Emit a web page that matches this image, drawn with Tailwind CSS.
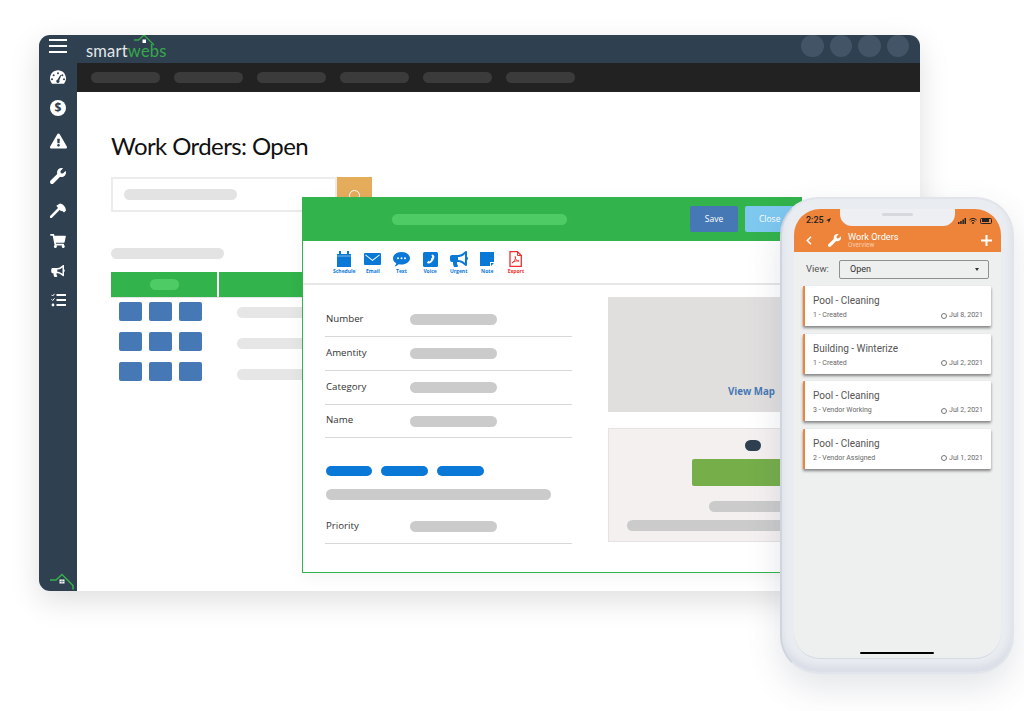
<!DOCTYPE html>
<html lang="en">
<head>
    <meta charset="UTF-8">
    <title>Smartwebs Work Orders</title>
    <script src="https://cdn.jsdelivr.net/npm/@tailwindcss/browser@4"></script>
</head>
<body class="bg-white">
<div class="relative w-[1024px] h-[711px] overflow-hidden bg-white font-['Open_Sans',sans-serif]">

    <!-- desktop window -->
    <div class="absolute left-[39px] top-[35px] w-[881px] h-[556px] flex rounded-t-[11px] rounded-bl-[11px] overflow-hidden bg-white shadow-[0_10px_30px_rgba(0,0,0,0.13)]">
        <aside class="w-[38px] shrink-0 bg-[#2f4050] flex flex-col items-center text-white">
            <div class="mt-[4px] w-[18px] flex flex-col gap-[4px]">
                <div class="h-[2px] bg-white"></div>
                <div class="h-[2px] bg-white"></div>
                <div class="h-[2px] bg-white"></div>
            </div>
            <svg class="mt-[16px] w-[16px] h-[16px]" viewBox="0 0 24 24" fill="#fff"><path fill-rule="evenodd" d="M12 2C5.4 2 0 7.4 0 14c0 2.9 1 5.6 2.8 7.7.3.2.6.3.9.3h16.6c.3 0 .6-.1.9-.3C23 19.600 24 16.900 24 14 24 7.400 18.600 2 12 2zM12 5a1.500 1.500 0 110 3 1.500 1.500 0 010-3zM5.500 8a1.500 1.500 0 110 3 1.500 1.500 0 010-3zM18.500 8a1.500 1.500 0 110 3 1.500 1.500 0 010-3zM3 14a1.500 1.500 0 110 3 1.500 1.500 0 010-3zM21 14a1.500 1.500 0 110 3 1.500 1.500 0 010-3zM15.500 9l1.400.600-3 7.400a2.500 2.500 0 11-2.800-.900z"/></svg>
            <div class="mt-[15px] w-[16px] h-[16px] rounded-full bg-white text-[#2f4050] text-[12px] leading-[16px] font-bold text-center">$</div>
            <svg class="mt-[17px] w-[17px] h-[16px]" viewBox="0 0 576 512" fill="#fff"><path d="M569.517 440.013C587.975 472.007 564.806 512 527.94 512H48.054c-36.937 0-59.999-40.055-41.577-71.987L246.423 24.995c18.467-32.009 64.72-31.951 83.154 0l239.94 415.018zM288 354c-25.405 0-46 20.595-46 46s20.595 46 46 46 46-20.595 46-46-20.595-46-46-46zm-43.673-165.346l7.418 136c.347 6.364 5.609 11.346 11.982 11.346h48.546c6.373 0 11.635-4.982 11.982-11.346l7.418-136c.375-6.874-5.098-12.654-11.982-12.654h-63.383c-6.884 0-12.356 5.78-11.981 12.654z"/></svg>
            <svg class="mt-[19px] w-[16px] h-[16px]" viewBox="0 0 512 512" fill="#fff"><path d="M507.73 109.1c-2.24-9.03-13.54-12.09-20.12-5.51l-74.36 74.36-67.88-11.31-11.31-67.88 74.36-74.36c6.62-6.62 3.43-17.9-5.66-20.16-47.38-11.74-99.55.91-136.58 37.93-39.64 39.64-50.55 97.1-34.05 147.2L18.74 402.76c-24.99 24.99-24.99 65.51 0 90.5 24.99 24.99 65.51 24.99 90.5 0l213.21-213.21c50.12 16.71 107.47 5.68 147.37-34.22 37.07-37.07 49.7-89.32 37.91-136.73z"/></svg>
            <svg class="mt-[19px] w-[16px] h-[15px]" viewBox="0 0 24 22" fill="#fff"><path d="M9.500 4 15 .5Q20 1 23 7L24 11 21 14 18 11.500 16.500 12 11.500 6.500z"/><path d="M1.500 20.500 13 9" stroke="#fff" stroke-width="4" stroke-linecap="round"/></svg>
            <svg class="mt-[16px] w-[16px] h-[14px]" viewBox="0 0 576 512" fill="#fff"><path d="M528.12 301.319l47.273-208C578.806 78.301 567.391 64 551.99 64H159.208l-9.166-44.81C147.758 8.021 137.93 0 126.529 0H24C10.745 0 0 10.745 0 24v16c0 13.255 10.745 24 24 24h69.883l70.248 343.435C147.325 417.1 136 435.222 136 456c0 30.928 25.072 56 56 56s56-25.072 56-56c0-15.674-6.447-29.835-16.824-40h209.647C430.447 426.165 424 440.326 424 456c0 30.928 25.072 56 56 56s56-25.072 56-56c0-22.172-12.888-41.332-31.579-50.405l5.517-24.276c3.413-15.018-8.002-29.319-23.403-29.319H218.117l-6.545-32h293.145c11.206 0 20.92-7.754 23.403-18.681z"/></svg>
            <svg class="mt-[17px] w-[14px] h-[12px]" viewBox="0 0 576 512" fill="#fff"><path d="M576 240c0-23.63-12.95-44.04-32-55.12V32.01C544 23.26 537.02 0 512 0c-7.12 0-14.19 2.38-19.98 7.02l-85.03 68.03C364.28 109.19 310.66 128 256 128H64c-35.35 0-64 28.65-64 64v96c0 35.35 28.65 64 64 64h33.7c-1.39 10.48-2.18 21.14-2.18 32 0 39.77 9.26 77.35 25.56 110.94 5.19 10.69 16.52 17.06 28.4 17.06h74.28c26.05 0 41.69-29.84 25.9-50.56-16.4-21.52-26.15-48.36-26.15-77.44 0-11.11 1.62-21.79 4.41-32H256c54.66 0 108.28 18.81 150.98 52.95l85.03 68.03a32.023 32.023 0 0 0 19.98 7.02c24.92 0 32-22.78 32-32V295.13C563.05 284.04 576 263.63 576 240zm-96 141.42l-33.05-26.44C392.95 311.78 325.12 288 256 288v-96c69.12 0 136.95-23.78 190.95-66.98L480 98.58v282.84z"/></svg>
            <svg class="mt-[16px] w-[15px] h-[14px]" viewBox="0 0 15 14" fill="none" stroke="#fff"><path d="M.5 1.800 1.700 3 3.500.8M.5 6.300 1.700 7.500 3.500 5.300" stroke-width="1"/><circle cx="2" cy="12" r="1.400" fill="#fff" stroke="none"/><path d="M5.500 2h9.500M5.500 7h9.500M5.500 12h9.500" stroke-width="1.800"/></svg>
            <svg class="mt-auto mb-[1px] ml-[7px] w-[24px] h-[17px]" viewBox="0 0 24 17" fill="none"><path d="M0 7h6L12 1.500 23 12.500v4" stroke="#34b34a" stroke-width="1.500"/><path d="M9.500 6.500h5v4h-5z" fill="#fff"/><path d="M12 6.500v4M9.500 8.500h5" stroke="#2f4050" stroke-width=".5"/></svg>
        </aside>
        <div class="flex-1 flex flex-col min-w-0">
            <header class="relative h-[28px] bg-[#2f4050] flex items-center shrink-0">
                <div class="ml-[9px] mt-[3px] text-[16.500px] leading-[28px] tracking-[0.2px] font-['Lato',sans-serif] text-[#e4e8ea]">smart<span class="text-[#35a94a]">webs</span></div>
                <svg class="absolute left-[57px] top-[-1px] w-[21px] h-[13px]" viewBox="0 0 21 13" fill="none"><path d="M0 6h4.500L10 1l10 10" stroke="#35a94a" stroke-width="1.300"/><path d="M8.500 5.500h3.500v3.500H8.500z" fill="#fff"/></svg>
                <div class="ml-auto mr-[11px] flex gap-[6px] -mt-[6px]">
                    <div class="w-[22.500px] h-[22px] rounded-full bg-[#425466]"></div>
                    <div class="w-[22.500px] h-[22px] rounded-full bg-[#425466]"></div>
                    <div class="w-[22.500px] h-[22px] rounded-full bg-[#425466]"></div>
                    <div class="w-[22.500px] h-[22px] rounded-full bg-[#425466]"></div>
                </div>
            </header>
            <nav class="h-[29px] bg-[#222222] flex items-center gap-[14px] pl-[14px] shrink-0">
                <div class="w-[69px] h-[11px] rounded-full bg-[#3b3b3b]"></div>
                <div class="w-[69px] h-[11px] rounded-full bg-[#3b3b3b]"></div>
                <div class="w-[69px] h-[11px] rounded-full bg-[#3b3b3b]"></div>
                <div class="w-[69px] h-[11px] rounded-full bg-[#3b3b3b]"></div>
                <div class="w-[69px] h-[11px] rounded-full bg-[#3b3b3b]"></div>
                <div class="w-[69px] h-[11px] rounded-full bg-[#3b3b3b]"></div>
            </nav>
            <main class="pl-[34px] flex-1">
                <h1 class="mt-[37px] text-[24px] tracking-[-0.6px] leading-[34px] font-['Lato',sans-serif] text-[#111111]">Work Orders: Open</h1>
                <div class="mt-[14px] flex h-[35px] w-[261px]">
                    <div class="w-[226px] border-2 border-[#ececec] flex items-center pl-[11px]">
                        <div class="w-[113px] h-[11px] rounded-full bg-[#e3e3e3]"></div>
                    </div>
                    <div class="w-[35px] bg-[#e5ac5c] flex items-center justify-center">
                        <div class="w-[11px] h-[11px] mt-[1px] rounded-full border border-white"></div>
                    </div>
                </div>
                <div class="mt-[36px] w-[113px] h-[11px] rounded-full bg-[#e3e3e3]"></div>
                <div class="mt-[13px] flex gap-[2px] h-[26px] w-[300px] border-b border-[#e4e4e4]">
                    <div class="w-[106px] h-[25px] bg-[#32b34b] flex items-center justify-center">
                        <div class="w-[29px] h-[11px] rounded-full bg-[#4fcb65]"></div>
                    </div>
                    <div class="flex-1 h-[25px] bg-[#32b34b]"></div>
                </div>
                <div class="mt-[3px] flex">
                    <div class="w-[126px] pl-[8px] grid grid-cols-[repeat(3,23px)] gap-x-[7px] gap-y-[11px] pt-[1px] content-start">
                        <div class="w-[23px] h-[19px] rounded-[2px] bg-[#4578b4]"></div>
                        <div class="w-[23px] h-[19px] rounded-[2px] bg-[#4578b4]"></div>
                        <div class="w-[23px] h-[19px] rounded-[2px] bg-[#4578b4]"></div>
                        <div class="w-[23px] h-[19px] rounded-[2px] bg-[#4578b4]"></div>
                        <div class="w-[23px] h-[19px] rounded-[2px] bg-[#4578b4]"></div>
                        <div class="w-[23px] h-[19px] rounded-[2px] bg-[#4578b4]"></div>
                        <div class="w-[23px] h-[19px] rounded-[2px] bg-[#4578b4]"></div>
                        <div class="w-[23px] h-[19px] rounded-[2px] bg-[#4578b4]"></div>
                        <div class="w-[23px] h-[19px] rounded-[2px] bg-[#4578b4]"></div>
                    </div>
                    <div class="pt-[6px] flex flex-col gap-[20px]">
                        <div class="w-[70px] h-[11px] rounded-full bg-[#e6e6e6]"></div>
                        <div class="w-[70px] h-[11px] rounded-full bg-[#e6e6e6]"></div>
                        <div class="w-[70px] h-[11px] rounded-full bg-[#e6e6e6]"></div>
                    </div>
                </div>
            </main>
        </div>
    </div>

    <!-- work order modal -->
    <div class="absolute left-[302px] top-[197px] w-[500px] h-[376px] bg-white border border-[#32b34b] shadow-[0_4px_16px_rgba(0,0,0,0.05)]">
        <div class="h-[43px] bg-[#32b34b] flex items-center">
            <div class="ml-[89px] -mt-[1px] w-[175px] h-[11px] shrink-0 rounded-full bg-[#4fcb65]"></div>
            <div class="ml-[123px] -mt-[2px] w-[48px] h-[26px] shrink-0 rounded-[2px] bg-[#4578b4] text-white text-[8.500px] leading-[26px] text-center">Save</div>
            <div class="ml-[7px] -mt-[2px] w-[60px] h-[26px] shrink-0 rounded-[2px] bg-[#7ec8f0] text-white text-[8.500px] leading-[26px] pl-[14px]">Close</div>
        </div>
        <div class="h-[44px] border-b-2 border-[#e6e6e6] pl-[27px] pt-[10px] flex text-[#0a78d6] text-[5px] leading-[6px] font-bold">
            <div class="w-[28.600px] flex flex-col items-center gap-[1px]">
                <svg class="w-[16px] h-[16px]" viewBox="0 0 16 16" fill="#0a78d6"><path d="M1 3h14v13H1z"/><path d="M3 0h2v4H3zM11 0h2v4h-2z"/><path d="M1 5h14" stroke="#fff" stroke-width=".5"/></svg>
                <span>Schedule</span>
            </div>
            <div class="w-[28.600px] flex flex-col items-center gap-[1px]">
                <svg class="w-[17px] h-[16px]" viewBox="0 0 17 16" fill="#0a78d6"><path fill-rule="evenodd" d="M1 2h15a1 1 0 011 1v10a1 1 0 01-1 1H1a1 1 0 01-1-1V3a1 1 0 011-1zM1.200 4.200 8.500 10l7.300-5.800-.5-.7L8.500 8.800 1.700 3.500z"/></svg>
                <span>Email</span>
            </div>
            <div class="w-[28.600px] flex flex-col items-center gap-[1px]">
                <svg class="w-[17px] h-[16px]" viewBox="0 0 17 16" fill="#0a78d6"><path fill-rule="evenodd" d="M8.500 1C13 1 17 3.700 17 7.300s-4 6.300-8.500 6.300c-1 0-2-.100-2.900-.400C4.500 14.400 3 15.200 1.500 15.500c.8-.8 1.500-2 1.700-3.200C1.200 11.200 0 9.400 0 7.300 0 3.700 4 1 8.500 1zM5 6.300a1 1 0 100 2 1 1 0 000-2zM8.500 6.300a1 1 0 100 2 1 1 0 000-2zM12 6.300a1 1 0 100 2 1 1 0 000-2z"/></svg>
                <span>Text</span>
            </div>
            <div class="w-[28.600px] flex flex-col items-center gap-[1px]">
                <svg class="w-[15px] h-[16px]" viewBox="0 0 15 16" fill="#0a78d6"><path fill-rule="evenodd" d="M1.500 1h12A1.500 1.500 0 0115 2.500v12a1.500 1.500 0 01-1.500 1.500h-12A1.500 1.500 0 010 14.500v-12A1.500 1.500 0 011.500 1zM9.800 3.500 8.500 4l.8 2.500-1.200.7c.3 1.200-.5 2.500-1.500 3.200l-1-.7-1.600 1.700.8 1.200c3.500.3 7-4.500 6.500-7.500z"/></svg>
                <span>Voice</span>
            </div>
            <div class="w-[28.600px] flex flex-col items-center gap-[1px]">
                <svg class="w-[18px] h-[16px]" viewBox="0 0 576 512" fill="#0a78d6"><path d="M576 240c0-23.63-12.95-44.04-32-55.12V32.01C544 23.26 537.02 0 512 0c-7.12 0-14.19 2.38-19.98 7.02l-85.03 68.03C364.28 109.19 310.66 128 256 128H64c-35.35 0-64 28.65-64 64v96c0 35.35 28.65 64 64 64h33.7c-1.39 10.48-2.18 21.14-2.18 32 0 39.77 9.26 77.35 25.56 110.94 5.19 10.69 16.52 17.06 28.4 17.06h74.28c26.05 0 41.69-29.84 25.9-50.56-16.4-21.52-26.15-48.36-26.15-77.44 0-11.11 1.62-21.79 4.41-32H256c54.66 0 108.28 18.81 150.98 52.95l85.03 68.03a32.023 32.023 0 0 0 19.98 7.02c24.92 0 32-22.78 32-32V295.13C563.05 284.04 576 263.63 576 240zm-96 141.42l-33.05-26.44C392.95 311.78 325.12 288 256 288v-96c69.12 0 136.95-23.78 190.95-66.98L480 98.58v282.84z"/></svg>
                <span>Urgent</span>
            </div>
            <div class="w-[28.600px] flex flex-col items-center gap-[1px]">
                <svg class="w-[14px] h-[16px]" viewBox="0 0 14 16" fill="#0a78d6"><path d="M0 1h14v10h-4v4H0z"/><path d="M11 12h3l-3 3z"/></svg>
                <span>Note</span>
            </div>
            <div class="w-[28.600px] flex flex-col items-center gap-[1px] text-[#f02d2d]">
                <svg class="w-[13px] h-[16px]" viewBox="0 0 13 16" fill="none" stroke="#f02d2d"><path d="M1 .700h7.500l3.800 3.800v10.800H1z" stroke-width="1.300"/><path d="M8.500 1v3.500H12" stroke-width="1"/><path d="M3 12c2-1 4-4 3.300-6.500C5.800 8 8 10.500 10 10c-2-.500-5 .2-7 2z" stroke-width=".9"/></svg>
                <span>Export</span>
            </div>
        </div>
        <div class="flex pt-[12px]">
            <div class="w-[247px] ml-[22px] shrink-0 pt-[6px] text-[9.700px] text-[#333333]">
                <div class="h-[34px] border-b border-[#d8d8d8] flex items-center">
                    <span class="w-[85px] pl-[1px] -mt-[1px]">Number</span><div class="w-[87px] h-[11px] rounded-full bg-[#cbcbcb]"></div>
                </div>
                <div class="h-[34px] border-b border-[#d8d8d8] flex items-center">
                    <span class="w-[85px] pl-[1px] -mt-[1px]">Amentity</span><div class="w-[87px] h-[11px] rounded-full bg-[#cbcbcb]"></div>
                </div>
                <div class="h-[34px] border-b border-[#d8d8d8] flex items-center">
                    <span class="w-[85px] pl-[1px] -mt-[1px]">Category</span><div class="w-[87px] h-[11px] rounded-full bg-[#cbcbcb]"></div>
                </div>
                <div class="h-[33px] border-b border-[#d8d8d8] flex items-center">
                    <span class="w-[85px] pl-[1px] -mt-[1px]">Name</span><div class="w-[87px] h-[11px] rounded-full bg-[#cbcbcb]"></div>
                </div>
                <div class="mt-[28px] ml-[1px] flex gap-[9px]">
                    <div class="w-[46px] h-[10px] rounded-full bg-[#0a78d6]"></div>
                    <div class="w-[47px] h-[10px] rounded-full bg-[#0a78d6]"></div>
                    <div class="w-[47px] h-[10px] rounded-full bg-[#0a78d6]"></div>
                </div>
                <div class="mt-[13px] ml-[1px] w-[225px] h-[11px] rounded-full bg-[#cbcbcb]"></div>
                <div class="mt-[10px] h-[34px] border-b border-[#d8d8d8] flex items-center">
                    <span class="w-[85px] pl-[1px]">Priority</span><div class="w-[87px] h-[11px] rounded-full bg-[#cbcbcb]"></div>
                </div>
            </div>
            <div class="ml-[36px] w-[193px] flex flex-col gap-[16px]">
                <div class="h-[115px] bg-[#e1dfde] flex items-end pb-[14px] pl-[120px] text-[9.700px] leading-[12px] font-bold text-[#4578b4] whitespace-nowrap">View Map</div>
                <div class="h-[114px] bg-[#f5f0f0] border border-[#e4e2e2] flex flex-col">
                    <div class="ml-[136px] mt-[11px] w-[16px] h-[11px] rounded-full bg-[#2f4050]"></div>
                    <div class="ml-[83px] mt-[8px] w-[110px] h-[27px] rounded-[2px] bg-[#76ae4a]"></div>
                    <div class="ml-[100px] mt-[15px] w-[90px] h-[11px] rounded-full bg-[#cbcbcb]"></div>
                    <div class="ml-[18px] mt-[8px] w-[170px] h-[11px] rounded-full bg-[#cbcbcb]"></div>
                </div>
            </div>
        </div>
    </div>

    <!-- phone -->
    <div class="absolute left-[780px] top-[197px] w-[234px] h-[477px] rounded-[38px] bg-[#e9ecf1] border-2 border-[#e1e5eb] border-l-[#cfd4de] shadow-[0_14px_34px_rgba(60,70,90,0.14),inset_0_-6px_6px_rgba(170,180,200,0.25)] p-[10px] pl-[12px] pr-[11px] pb-[13px]">
        <div class="relative w-full h-full rounded-[26px] overflow-hidden bg-[#eeefef] border-b border-[#d5dbe3] font-['Roboto',sans-serif]">
            <div class="h-[43px] bg-[#ee843a] text-white relative">
                <div class="absolute left-[46px] top-0 w-[115px] h-[17px] rounded-b-[12px] bg-[#edeff2]">
                    <div class="mx-auto mt-[4px] w-[31px] h-[3px] rounded-full bg-[#d5d8dc]"></div>
                </div>
                <div class="flex items-center h-[20px] pl-[12px] pr-[9px] pt-[3px] text-[9px] font-medium text-[#222222]">
                    <span>2:25</span>
                    <svg class="ml-[2px] w-[5px] h-[5px]" viewBox="0 0 6 6" fill="#222222"><path d="M6 0 0 2.800l2.800.4L3.300 6z"/></svg>
                    <svg class="ml-auto w-[8px] h-[6px]" viewBox="0 0 8 6" fill="#222222"><path d="M0 4h1.500v2H0zM2.200 3h1.500v3H2.200zM4.400 1.500h1.500V6H4.400zM6.500 0H8v6H6.500z"/></svg>
                    <svg class="ml-[3px] w-[8px] h-[6px]" viewBox="0 0 8 6" fill="none" stroke="#222222"><path d="M.4 2a5 5 0 017.200 0M1.800 3.400a3 3 0 014.400 0" stroke-width="1"/><circle cx="4" cy="5" r=".9" fill="#222222" stroke="none"/></svg>
                    <div class="ml-[3px] w-[12px] h-[6px] rounded-[1.500px] border border-[#222222] p-[0.500px]"><div class="w-[7px] h-full bg-[#222222]"></div></div>
                </div>
                <div class="flex items-center h-[23px] pl-[12px] pr-[9px]">
                    <svg class="w-[6px] h-[9px]" viewBox="0 0 6 9" fill="none" stroke="#fff" stroke-width="1.600"><path d="M5 .700 1.300 4.500 5 8.300"/></svg>
                    <svg class="ml-[16px] w-[13px] h-[13px]" viewBox="0 0 512 512" fill="#fff"><path d="M507.73 109.1c-2.24-9.03-13.54-12.09-20.12-5.51l-74.36 74.36-67.88-11.31-11.31-67.88 74.36-74.36c6.62-6.62 3.43-17.9-5.66-20.16-47.38-11.74-99.55.91-136.58 37.93-39.64 39.64-50.55 97.1-34.05 147.2L18.74 402.76c-24.99 24.99-24.99 65.51 0 90.5 24.99 24.99 65.51 24.99 90.5 0l213.21-213.21c50.12 16.71 107.47 5.68 147.37-34.22 37.07-37.07 49.7-89.32 37.91-136.73z"/></svg>
                    <div class="ml-[7px] flex flex-col">
                        <span class="text-[9.200px] leading-[10px] whitespace-nowrap">Work Orders</span>
                        <span class="text-[6.500px] leading-[7px] text-white/60">Overview</span>
                    </div>
                    <svg class="ml-auto w-[11px] h-[11px]" viewBox="0 0 11 11" fill="none" stroke="#fff" stroke-width="2"><path d="M5.500 0v11M0 5.500h11"/></svg>
                </div>
            </div>
            <div class="flex items-center h-[19px] mt-[8px] pl-[12px] text-[9.500px] text-[#555555]">
                <span class="w-[33px]">View:</span>
                <div class="w-[150px] h-[19px] border border-[#8f8f8f] rounded-[2px] flex items-center pl-[10px] pr-[9px] text-[9px] text-[#333333]">
                    <span>Open</span>
                    <div class="ml-auto w-0 h-0 border-x-[2.500px] border-x-transparent border-t-[3px] border-t-[#333333]"></div>
                </div>
            </div>
            <div class="mt-[7px] ml-[9px] w-[188px] flex flex-col gap-[7.500px]">
                <div class="h-[40px] bg-white border-l-2 border-[#ee843a] rounded-[1px] shadow-[0_2px_3px_rgba(0,0,0,0.45)] pl-[8px] pr-[8px] pt-[8px]">
                    <div class="text-[10px] leading-[13px] text-[#555555]">Pool - Cleaning</div>
                    <div class="mt-[4px] flex items-center text-[7px] leading-[9px] text-[#666666]"><span>1 - Created</span><span class="ml-auto flex items-center gap-[2px]"><span class="w-[6px] h-[6px] rounded-full border-[0.7px] border-[#777777]"></span>Jul 8, 2021</span></div>
                </div>
                <div class="h-[40px] bg-white border-l-2 border-[#ee843a] rounded-[1px] shadow-[0_2px_3px_rgba(0,0,0,0.45)] pl-[8px] pr-[8px] pt-[8px]">
                    <div class="text-[10px] leading-[13px] text-[#555555]">Building - Winterize</div>
                    <div class="mt-[4px] flex items-center text-[7px] leading-[9px] text-[#666666]"><span>1 - Created</span><span class="ml-auto flex items-center gap-[2px]"><span class="w-[6px] h-[6px] rounded-full border-[0.7px] border-[#777777]"></span>Jul 2, 2021</span></div>
                </div>
                <div class="h-[40px] bg-white border-l-2 border-[#ee843a] rounded-[1px] shadow-[0_2px_3px_rgba(0,0,0,0.45)] pl-[8px] pr-[8px] pt-[8px]">
                    <div class="text-[10px] leading-[13px] text-[#555555]">Pool - Cleaning</div>
                    <div class="mt-[4px] flex items-center text-[7px] leading-[9px] text-[#666666]"><span>3 - Vendor Working</span><span class="ml-auto flex items-center gap-[2px]"><span class="w-[6px] h-[6px] rounded-full border-[0.7px] border-[#777777]"></span>Jul 2, 2021</span></div>
                </div>
                <div class="h-[40px] bg-white border-l-2 border-[#ee843a] rounded-[1px] shadow-[0_2px_3px_rgba(0,0,0,0.45)] pl-[8px] pr-[8px] pt-[8px]">
                    <div class="text-[10px] leading-[13px] text-[#555555]">Pool - Cleaning</div>
                    <div class="mt-[4px] flex items-center text-[7px] leading-[9px] text-[#666666]"><span>2 - Vendor Assigned</span><span class="ml-auto flex items-center gap-[2px]"><span class="w-[6px] h-[6px] rounded-full border-[0.7px] border-[#777777]"></span>Jul 1, 2021</span></div>
                </div>
            </div>
            <div class="absolute left-[66px] bottom-[4px] w-[74px] h-[2.500px] rounded-full bg-black"></div>
        </div>
    </div>
</div>
</body>
</html>
